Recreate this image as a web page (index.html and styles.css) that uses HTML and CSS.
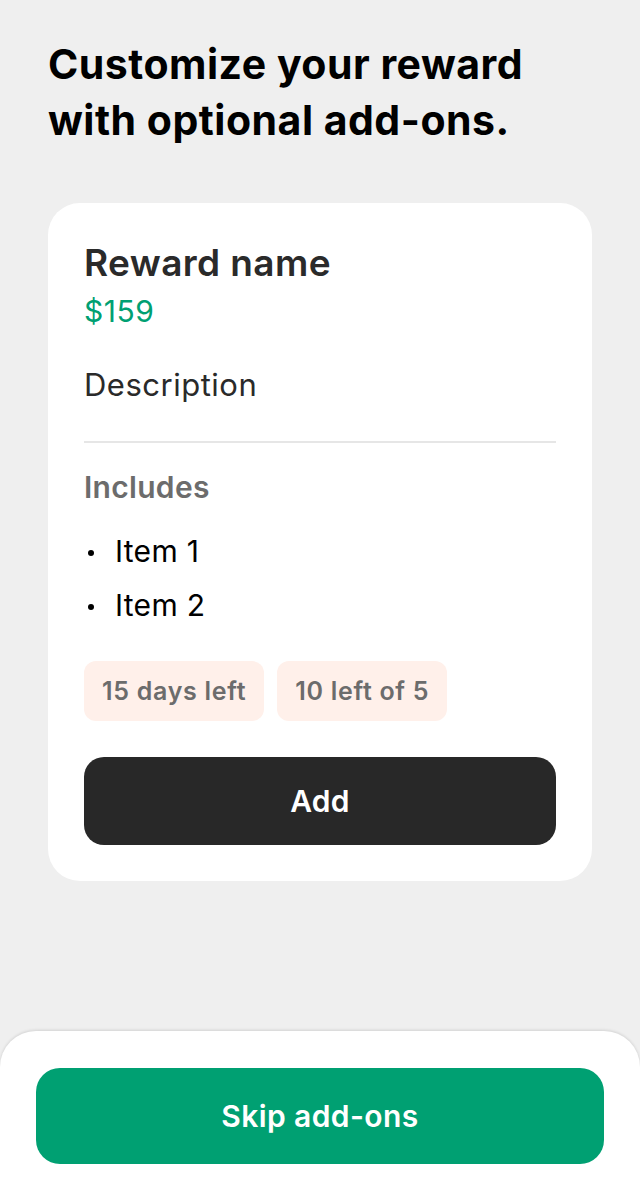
FILE: index.html
```html
<!DOCTYPE html>
<html>
<head>
<meta charset="utf-8">
<link rel="stylesheet" href="styles.css">
</head>
<body>
<main class="page">
  <h1 class="title">Customize your reward with optional add-ons.</h1>
  <section class="card">
    <h2 class="reward-name">Reward name</h2>
    <div class="price">$159</div>
    <p class="desc">Description</p>
    <hr class="divider">
    <h3 class="includes">Includes</h3>
    <ul class="items">
      <li>Item 1</li>
      <li>Item 2</li>
    </ul>
    <div class="chips">
      <span class="chip">15 days left</span>
      <span class="chip">10 left of 5</span>
    </div>
    <button class="btn-add">Add</button>
  </section>
</main>
<footer class="sheet">
  <button class="btn-skip">Skip add-ons</button>
</footer>
</body>
</html>
```
FILE: styles.css
```css
* { box-sizing: border-box; }
html, body { margin: 0; padding: 0; }
body {
  width: 640px;
  height: 1200px;
  background: #efefef;
  font-family: Inter, "Noto Sans", sans-serif;
  position: relative;
  overflow: hidden;
}
.page { padding: 36px 48px 0 48px; }
.title {
  margin: 0;
  max-width: 500px;
  font-size: 41px;
  line-height: 56px;
  font-weight: 700;
  color: #000;
  letter-spacing: 0.5px;
}
.card {
  margin-top: 55px;
  background: #fff;
  border-radius: 32px;
  padding: 36px;
  width: 544px;
}
.reward-name {
  margin: 0;
  font-size: 37px;
  line-height: 48px;
  font-weight: 600;
  color: #2a2a2a;
  letter-spacing: 0.4px;
}
.price {
  margin-top: 4px;
  font-size: 30px;
  line-height: 40px;
  color: #00a072;
  letter-spacing: 0.5px;
}
.desc {
  margin: 34px 0 0 0;
  font-size: 31px;
  line-height: 40px;
  color: #2a2a2a;
  letter-spacing: 0.5px;
}
.divider {
  border: 0;
  height: 2px;
  background: #e6e6e6;
  margin: 36px 0 0 0;
}
.includes {
  margin: 24px 0 0 0;
  font-size: 30px;
  line-height: 40px;
  font-weight: 600;
  color: #6c6c6c;
  letter-spacing: 0.3px;
}
.items {
  margin: 17px 0 0 0;
  padding: 0;
  list-style: none;
  font-size: 30px;
  line-height: 54px;
  color: #000;
  letter-spacing: 0.3px;
}
.items li {
  display: flex;
  align-items: center;
}
.items li::before {
  content: "";
  width: 6px;
  height: 6px;
  border-radius: 50%;
  background: #000;
  margin: 3px 21px 0 4px;
  flex: none;
}
.chips {
  display: flex;
  gap: 13px;
  margin-top: 29px;
}
.chip {
  background: #fff0ea;
  border-radius: 12px;
  height: 60px;
  padding: 0 18px;
  display: flex;
  align-items: center;
  font-size: 25px;
  font-weight: 600;
  color: #6c6c6c;
  letter-spacing: 0.7px;
}
.btn-add {
  display: block;
  width: 100%;
  margin-top: 36px;
  height: 88px;
  border: 0;
  border-radius: 20px;
  background: #282828;
  color: #fff;
  font-family: inherit;
  font-size: 30px;
  font-weight: 600;
  letter-spacing: 0.3px;
}
.sheet {
  position: absolute;
  left: 0;
  right: 0;
  bottom: 0;
  height: 169px;
  background: #fff;
  border-radius: 36px 36px 0 0;
  box-shadow: 0 -1px 3px rgba(0,0,0,0.12);
  padding: 37px 36px 0 36px;
}
.btn-skip {
  display: block;
  width: 100%;
  height: 96px;
  border: 0;
  border-radius: 24px;
  background: #00a072;
  color: #fff;
  font-family: inherit;
  font-size: 30px;
  font-weight: 600;
  letter-spacing: 0.4px;
}
```
